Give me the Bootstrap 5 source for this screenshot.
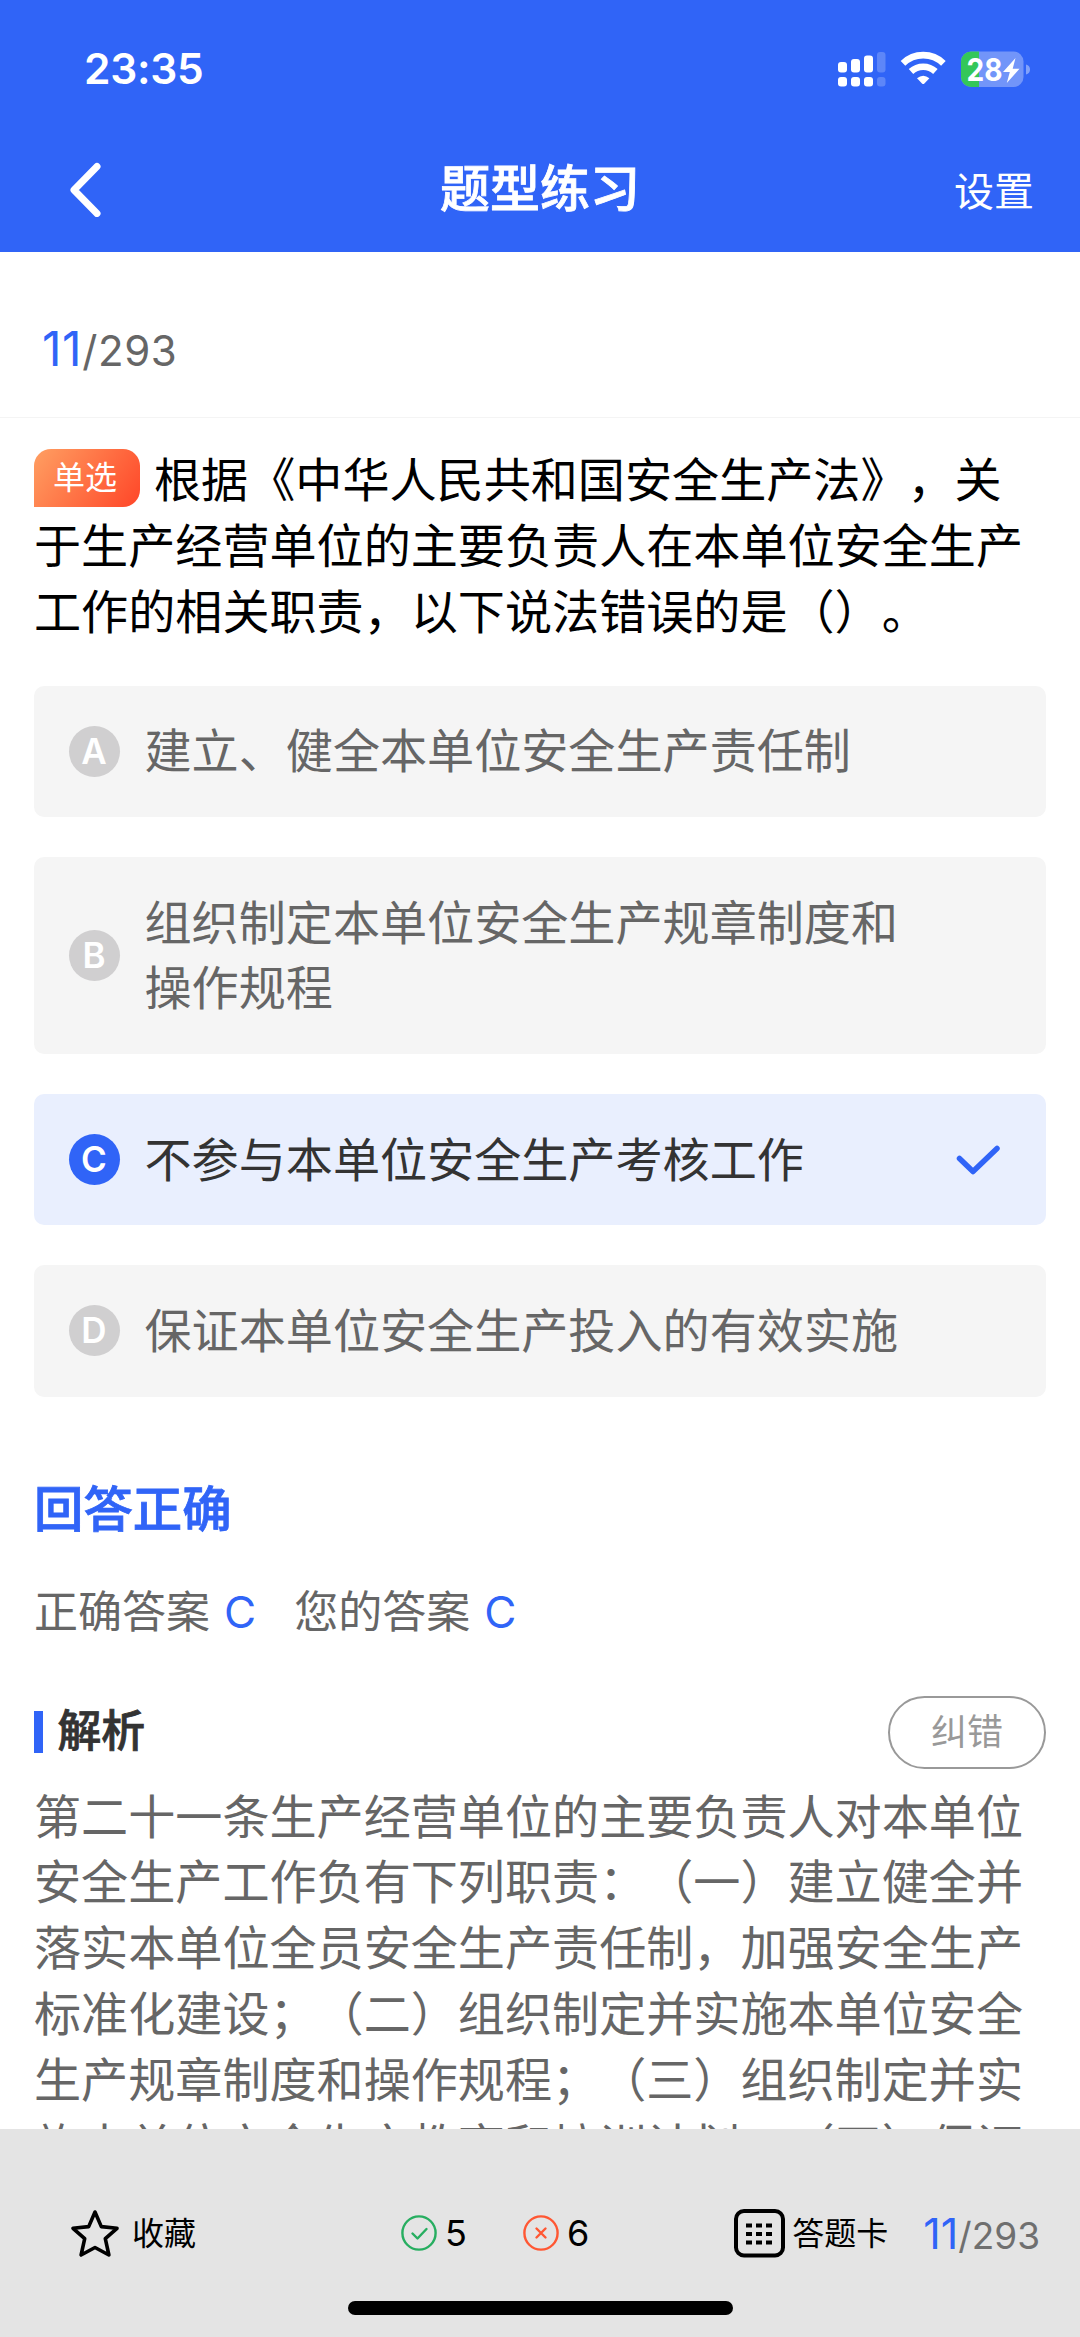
<!DOCTYPE html>
<html lang="zh-CN">
<head>
<meta charset="utf-8">
<meta name="viewport" content="width=device-width, initial-scale=1">
<title>题型练习</title>
<link href="https://cdn.jsdelivr.net/npm/bootstrap@5.3.0/dist/css/bootstrap.min.css" rel="stylesheet">
<style>
  :root { --brand: #3064f7; }
  html, body { height: 2337px; overflow: hidden; }
  body {
    font-family: Inter, "Noto Sans CJK SC", sans-serif;
    text-spacing-trim: space-all;
    color: #000; background: #fff;
  }
  svg { display: block; flex: none; }
  .brand { color: var(--brand); }
  /* medium weight for the CJK headings */
  .semi { -webkit-text-stroke: .8px currentColor; }

  .app-header { height: 252px; background: var(--brand); color: #fff; }
  .status-bar { height: 138px; padding: 0 50px 0 84px; }
  .clock { font-size: 42.5px; font-weight: 600; line-height: 1; letter-spacing: -.3px; }
  .title-bar { height: 102px; padding: 0 46px 0 69px; }
  .title-bar h1 { font-size: 50px; font-weight: 500; line-height: 1; }
  .side-start { width: 87px; }
  .side-end { width: 110px; }
  .settings { font-size: 40px; line-height: 1; padding-top: 5px; }

  .counter { height: 166px; padding: 29px 42px 0; border-bottom: 1px solid #f4f4f4; color: #666; font-size: 42px; line-height: 1; letter-spacing: .6px; }
  .counter .now { font-size: 48px; }

  .content-area { padding: 29px 34px 0; }
  .question { font-size: 47.1px; line-height: 65.7px; margin-bottom: 41px; width: 990px; }
  .tag {
    display: inline-flex; align-items: center; justify-content: center;
    width: 106px; height: 58px; margin-right: 14px; padding-right: 4px; vertical-align: middle;
    border-radius: 17px 17px 17px 0; background: linear-gradient(125deg, #ff9f62, #ff4628);
    color: #fff; font-size: 32px; line-height: 1; position: relative; top: -6px;
  }
  .options { gap: 39.8px; }
  .option { padding: 32.9px 34.5px; border-radius: 10px; background: #f5f5f5; color: #666; }
  .option .letter { width: 51px; height: 51px; border-radius: 50%; background: #d0cfd0; color: #fff; font-size: 35px; font-weight: 600; line-height: 1; flex: none; }
  .option .label { font-size: 47.1px; line-height: 65.7px; width: 770px; margin-left: 25px; }
  .option.chosen { background: #e9effe; color: #333; }
  .option.chosen .letter { background: var(--brand); }

  .verdict { margin-top: 79px; font-size: 49.4px; line-height: 66px; font-weight: 500; }
  .answers { margin-top: 41px; font-size: 44px; line-height: 58px; color: #666; }
  .answers .pick { margin-left: 14px; }
  .answers .mine { margin-left: 38px; }
  .explain-head { margin-top: 54px; height: 75px; }
  .explain-head .tick { width: 8.5px; height: 42px; background: var(--brand); }
  .explain-head h2 { font-size: 43.8px; line-height: 1; font-weight: 500; color: #333; margin-left: 15px; }
  .report { width: 158px; height: 73px; border: 2.5px solid #999; border-radius: 37px; color: #999; font-size: 36px; line-height: 1; background: #fff; }
  .explain { margin-top: 14px; font-size: 47.1px; line-height: 65.9px; color: #666; width: 990px; }

  .bottom-bar { height: 208px; background: #e4e4e4; }
  .tools { height: 207px; padding: 0 40px 0 70px; }
  .tools .word { font-size: 32px; line-height: 1; padding-top: 2px; }
  .tools .num { font-size: 36px; line-height: 1; }
  .tools .gap-icon { margin-left: 8px; }
  .star-word { margin-left: 12px; }
  .right-mark { margin-left: 205px; }
  .wrong-mark { margin-left: 56px; }
  .card-word { margin-left: 7px; }
  .tally { color: #6f6f6f; font-size: 37px; line-height: 1; margin-left: 35px; padding-top: 2px; }
  .tally .now { font-size: 43px; }
  .home-line { width: 385px; height: 14px; border-radius: 7px; background: #000; position: absolute; left: 348px; bottom: 22px; }
</style>
</head>
<body>

<header class="app-header">
  <div class="status-bar d-flex align-items-center justify-content-between">
    <span class="clock">23:35</span>
    <svg width="194" height="38" viewBox="0 0 194 38" fill="#fff">
      <g>
        <rect x="2" y="12" width="9" height="10.500" rx="3"/><rect x="15" y="9" width="9" height="13.500" rx="3"/>
        <rect x="28" y="5.500" width="9" height="17" rx="3"/><rect x="41" y="2" width="8.500" height="20.500" rx="3" opacity=".22"/>
        <rect x="2" y="27" width="9" height="9.500" rx="3"/><rect x="15" y="27" width="9" height="9.500" rx="3"/>
        <rect x="28" y="27" width="9" height="9.500" rx="3"/><rect x="41" y="27" width="8.500" height="9.500" rx="3" opacity=".22"/>
      </g>
      <g fill="none" stroke="#fff" stroke-width="6.600">
        <path d="M67 13.300a29 29 0 0 1 40.400 0"/><path d="M75 21.500a18 18 0 0 1 24.400 0"/>
      </g>
      <path d="M81 28.200q6.200-5 12.400 0l-5 5.400q-1.200 1-2.400 0z"/>
      <rect x="125" y="1.500" width="62.500" height="35.500" rx="10" opacity=".32"/>
      <path d="M135 1.500h8V37h-8a10 10 0 0 1-10-10V11.500a10 10 0 0 1 10-10z" fill="#34c759"/>
      <path d="M190 14.500q4 1 4 5t-4 5z" opacity=".4"/>
      <text x="130.500" y="30.500" font-size="31" font-weight="700" textLength="36" lengthAdjust="spacingAndGlyphs">28</text>
      <path d="M179.500 8l-12.500 14h6.800l-3 11 12.700-14.200h-6.800z"/>
    </svg>
  </div>
  <div class="title-bar d-flex align-items-center justify-content-between">
    <div class="side-start">
      <svg width="34" height="56" viewBox="0 0 34 56" fill="none" stroke="#fff" stroke-width="7" stroke-linecap="round" stroke-linejoin="round"><path d="M28 5.500L5 29l23 23.500"/></svg>
    </div>
    <h1 class="m-0 semi">题型练习</h1>
    <div class="side-end settings text-end">设置</div>
  </div>
</header>

<main>
  <div class="counter d-flex align-items-center">
    <div><span class="now brand">11</span>/293</div>
  </div>

  <div class="content-area">
    <p class="question"><span class="tag">单选</span>根据《中华人民共和国安全生产法》，关于生产经营单位的主要负责人在本单位安全生产工作的相关职责，以下说法错误的是（）。</p>

    <div class="options d-flex flex-column">
      <div class="option d-flex align-items-center">
        <span class="letter d-flex align-items-center justify-content-center">A</span>
        <span class="label">建立、健全本单位安全生产责任制</span>
      </div>
      <div class="option d-flex align-items-center">
        <span class="letter d-flex align-items-center justify-content-center">B</span>
        <span class="label">组织制定本单位安全生产规章制度和操作规程</span>
      </div>
      <div class="option chosen d-flex align-items-center">
        <span class="letter d-flex align-items-center justify-content-center">C</span>
        <span class="label">不参与本单位安全生产考核工作</span>
        <svg class="ms-auto me-2" width="50" height="40" viewBox="0 0 50 40" fill="none" stroke="#3064f7" stroke-width="5.500" stroke-linecap="round" stroke-linejoin="round"><path d="M5.500 18.500L19 31.500 43 8.500"/></svg>
      </div>
      <div class="option d-flex align-items-center">
        <span class="letter d-flex align-items-center justify-content-center">D</span>
        <span class="label">保证本单位安全生产投入的有效实施</span>
      </div>
    </div>

    <div class="verdict brand semi">回答正确</div>
    <div class="answers d-flex">
      <span>正确答案</span><span class="pick brand">C</span>
      <span class="mine">您的答案</span><span class="pick brand">C</span>
    </div>

    <div class="explain-head d-flex align-items-center">
      <span class="tick"></span>
      <h2 class="mb-0 semi">解析</h2>
      <button type="button" class="report ms-auto p-0">纠错</button>
    </div>
    <p class="explain mb-0">第二十一条生产经营单位的主要负责人对本单位安全生产工作负有下列职责：（一）建立健全并落实本单位全员安全生产责任制，加强安全生产标准化建设；（二）组织制定并实施本单位安全生产规章制度和操作规程；（三）组织制定并实施本单位安全生产教育和培训计划；（四）保证</p>
  </div>
</main>

<footer class="bottom-bar fixed-bottom">
  <div class="tools d-flex align-items-center">
    <svg width="50" height="50" viewBox="0 0 50 50" fill="none" stroke="#000" stroke-width="3.600" stroke-linejoin="round"><path d="M25 4l6.300 14.600 15.700 1.700-11.700 10.400 3.600 16.300L25 39.500 11.100 47l3.600-16.300L3 20.300l15.700-1.700z"/></svg>
    <span class="word star-word">收藏</span>
    <svg class="right-mark" width="36" height="36" viewBox="0 0 36 36" fill="none" stroke="#27ae60" stroke-width="2.400" stroke-linecap="round" stroke-linejoin="round"><circle cx="18" cy="18" r="16.600"/><path d="M11.500 18.500l5 5 9-9.500"/></svg>
    <span class="num gap-icon">5</span>
    <svg class="wrong-mark" width="36" height="36" viewBox="0 0 36 36" fill="none" stroke="#ff5733" stroke-width="2.400" stroke-linecap="round"><circle cx="18" cy="18" r="16.600"/><path d="M13.500 13.500l9 9M22.500 13.500l-9 9"/></svg>
    <span class="num gap-icon">6</span>
    <svg class="ms-auto" width="52" height="50" viewBox="0 0 52 50"><rect x="3" y="3" width="47" height="44.500" rx="8" fill="none" stroke="#000" stroke-width="4"/><path d="M13 17.500h6m4 0h6m4 0h6M13 26h6m4 0h6m4 0h6M13 34.500h6m4 0h6m4 0h6" stroke="#000" stroke-width="4"/></svg>
    <span class="word card-word">答题卡</span>
    <span class="tally"><span class="now brand">11</span>/293</span>
  </div>
  <div class="home-line"></div>
</footer>

<script src="https://cdn.jsdelivr.net/npm/bootstrap@5.3.0/dist/js/bootstrap.bundle.min.js"></script>
</body>
</html>
